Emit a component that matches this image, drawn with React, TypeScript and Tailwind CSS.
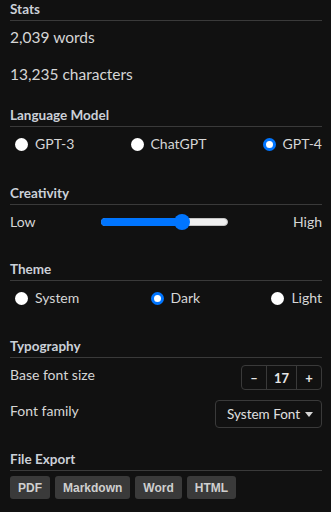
import React from "react";

const font = { fontFamily: 'Lato, "Noto Sans", sans-serif' };

function Heading({ children, className = "" }: { children: React.ReactNode; className?: string }) {
  return (
    <div
      className={`text-[13.5px] leading-[16px] font-bold text-[#cbd0d8] pb-[3px] border-b border-[#3a3a3a] ${className}`}
    >
      {children}
    </div>
  );
}

function Radio({ checked, label }: { checked?: boolean; label: string }) {
  return (
    <div className="flex items-center h-[20px]">
      {checked ? (
        <div className="ml-[5px] w-[13px] h-[13px] rounded-full bg-white border-[3px] border-[#0075ff]" />
      ) : (
        <div className="ml-[5px] w-[13px] h-[13px] rounded-full bg-white" />
      )}
      <span className="ml-[7px]">{label}</span>
    </div>
  );
}

export default function App() {
  return (
    <div
      className="bg-[#111111] w-[331px] h-[512px] pl-[10px] pr-[9px] pt-[1px] overflow-hidden text-[#d6d6d6] text-[14px] leading-[20px]"
      style={font}
    >
      <Heading>Stats</Heading>
      <div className="mt-[6px] text-[15.5px]">2,039 words</div>
      <div className="mt-[17px] text-[15.5px]">13,235 characters</div>

      <Heading className="mt-[23px]">Language Model</Heading>
      <div className="mt-[7px] flex justify-between">
        <Radio label="GPT-3" />
        <Radio label="ChatGPT" />
        <Radio label="GPT-4" checked />
      </div>

      <Heading className="mt-[31px]">Creativity</Heading>
      <div className="mt-[7px] flex items-center justify-between h-[20px]">
        <span>Low</span>
        <div className="relative w-[127px] h-[8px] rounded-full bg-[#efefef] border border-[#c4c4c4]">
          <div className="absolute left-[-1px] top-[-1px] h-[8px] w-[82px] rounded-full bg-[#0075ff]" />
          <div className="absolute left-[72px] top-[-5px] w-[16px] h-[16px] rounded-full bg-[#0075ff]" />
        </div>
        <span>High</span>
      </div>

      <Heading className="mt-[29px]">Theme</Heading>
      <div className="mt-[7px] flex justify-between">
        <Radio label="System" />
        <Radio label="Dark" checked />
        <Radio label="Light" />
      </div>

      <Heading className="mt-[30px]">Typography</Heading>
      <div className="mt-[7px] flex justify-between items-start">
        <span>Base font size</span>
        <div className="flex h-[25px] border border-[#3a3a3a] rounded-[4px] text-[13px] font-bold text-[#e6e6e6]">
          <div className="w-[24px] flex items-center justify-center">–</div>
          <div className="w-[31px] flex items-center justify-center border-l border-r border-[#3a3a3a]">17</div>
          <div className="w-[24px] flex items-center justify-center">+</div>
        </div>
      </div>
      <div className="mt-[10px] flex justify-between items-start">
        <span className="mt-[1px]">Font family</span>
        <div className="flex items-center h-[28px] w-[107px] pl-[11px] border border-[#3a3a3a] rounded-[4px] text-[13.5px] text-[#e0e0e0] whitespace-nowrap">
          <span>System Font</span>
          <svg className="ml-[5px] mt-[1px]" width="8" height="5" viewBox="0 0 8 5">
            <path d="M0 0 H8 L4 5 Z" fill="#d6d6d6" />
          </svg>
        </div>
      </div>

      <Heading className="mt-[23px]">File Export</Heading>
      <div
        className="mt-[5px] flex gap-[5px] text-[12px] font-bold text-[#cfcfcf]"
        style={{ fontFamily: '"Liberation Sans", Arial, sans-serif' }}
      >
        {["PDF", "Markdown", "Word", "HTML"].map((b) => (
          <div key={b} className="h-[23px] px-[8px] flex items-center bg-[#3a3a3a] rounded-[3px]">
            {b}
          </div>
        ))}
      </div>
    </div>
  );
}
